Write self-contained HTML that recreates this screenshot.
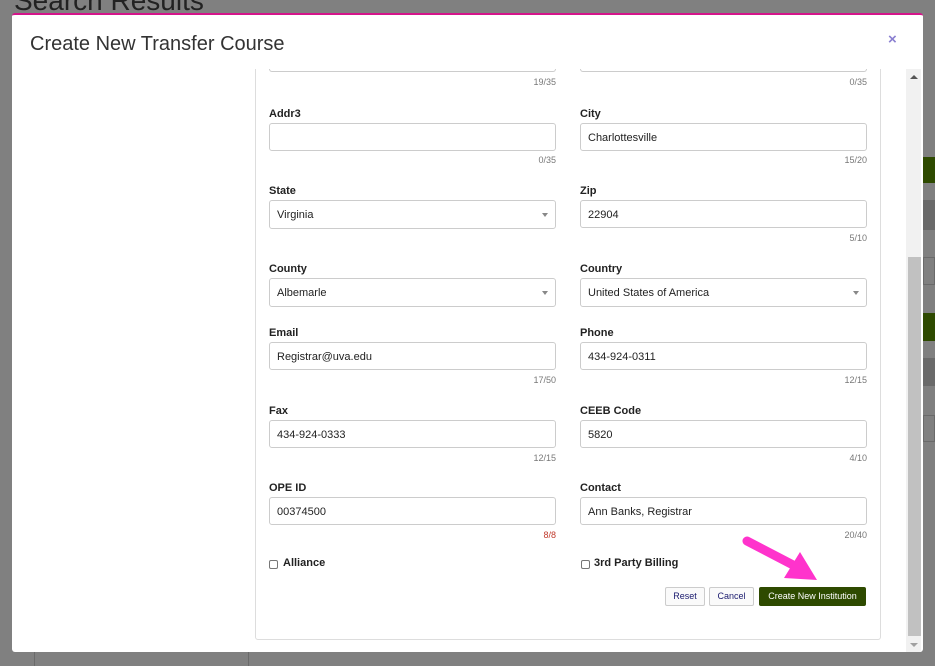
<!DOCTYPE html>
<html><head><style>
*{box-sizing:border-box;margin:0;padding:0}
body{width:935px;height:666px;overflow:hidden;background:#808080;font-family:"Liberation Sans",Arial,sans-serif;position:relative}
.a{position:absolute}
.lbl{position:absolute;font-size:11px;font-weight:bold;color:#222;margin-top:2px}
.inp{position:absolute;height:28px;width:287px;border:1px solid #ccc;border-radius:3px;background:#fff;font-size:11px;color:#222;padding:8px 7px 0 7px}
.cnt{position:absolute;font-size:9px;color:#777;text-align:right;width:60px}
.sel:after{content:"";position:absolute;right:7px;top:12px;border-left:3px solid transparent;border-right:3px solid transparent;border-top:4px solid #888}
.cb{position:absolute;width:9px;height:9px;border:1px solid #777;border-radius:2px;background:#fff}
.btn{position:absolute;height:19px;border:1px solid #ccc;border-radius:2px;background:#fafafa;font-size:9px;color:#1a1a6e;text-align:center;line-height:17px}
</style></head><body>
<div class="a" style="left:14px;top:-15px;font-size:28px;color:#222">Search Results</div>
<div class="a" style="left:923px;top:157px;width:12px;height:26px;background:#2e4a00"></div>
<div class="a" style="left:923px;top:200px;width:12px;height:30px;background:#6a6a6a"></div>
<div class="a" style="left:923px;top:257px;width:12px;height:28px;border:1px solid #6a6a6a"></div>
<div class="a" style="left:923px;top:313px;width:12px;height:28px;background:#2e4a00"></div>
<div class="a" style="left:923px;top:358px;width:12px;height:28px;background:#6a6a6a"></div>
<div class="a" style="left:923px;top:415px;width:12px;height:27px;border:1px solid #6a6a6a"></div>
<div class="a" style="left:34px;top:652px;width:1px;height:14px;background:#6a6a6a"></div>
<div class="a" style="left:248px;top:652px;width:1px;height:14px;background:#6a6a6a"></div>

<div class="a" style="left:12px;top:13px;width:911px;height:639px;background:#fff;border-top:2px solid #d4148a;border-radius:3px"></div>
<div class="a" style="left:906px;top:69px;width:15px;height:583px;background:#f1f1f1"></div>
<div class="a" style="left:908px;top:257px;width:13px;height:379px;background:#c1c1c1"></div>
<div class="a" style="left:910px;top:75px;border-left:4px solid transparent;border-right:4px solid transparent;border-bottom:4px solid #555"></div>
<div class="a" style="left:910px;top:643px;border-left:4px solid transparent;border-right:4px solid transparent;border-top:4px solid #a0a0a0"></div>
<div class="a" style="left:255px;top:40px;width:626px;height:600px;border:1px solid #ddd;border-radius:3px"></div>
<div class="inp" style="left:269px;top:44px;border-top:none"></div>
<div class="inp" style="left:580px;top:44px;border-top:none"></div>
<div class="a" style="left:13px;top:16px;width:893px;height:53px;background:#fff;z-index:1"></div>
<div class="a" style="left:30px;top:33px;font-size:20px;color:#333;z-index:2">Create New Transfer Course</div>
<div class="a" style="left:888px;top:31px;font-size:15px;color:#8a7fd0;font-weight:bold;z-index:2">×</div>
<div class="cnt" style="left:496px;top:77px">19/35</div>
<div class="cnt" style="left:807px;top:77px">0/35</div>

<div class="lbl" style="left:269px;top:106px">Addr3</div>
<div class="inp" style="left:269px;top:123px"></div>
<div class="cnt" style="left:496px;top:155px">0/35</div>
<div class="lbl" style="left:580px;top:106px">City</div>
<div class="inp" style="left:580px;top:123px">Charlottesville</div>
<div class="cnt" style="left:807px;top:155px">15/20</div>

<div class="lbl" style="left:269px;top:183px">State</div>
<div class="inp sel" style="left:269px;top:200px;height:29px">Virginia</div>
<div class="lbl" style="left:580px;top:183px">Zip</div>
<div class="inp" style="left:580px;top:200px">22904</div>
<div class="cnt" style="left:807px;top:233px">5/10</div>

<div class="lbl" style="left:269px;top:261px">County</div>
<div class="inp sel" style="left:269px;top:278px;height:29px">Albemarle</div>
<div class="lbl" style="left:580px;top:261px">Country</div>
<div class="inp sel" style="left:580px;top:278px;height:29px">United States of America</div>

<div class="lbl" style="left:269px;top:325px">Email</div>
<div class="inp" style="left:269px;top:342px">Registrar@uva.edu</div>
<div class="cnt" style="left:496px;top:375px">17/50</div>
<div class="lbl" style="left:580px;top:325px">Phone</div>
<div class="inp" style="left:580px;top:342px">434-924-0311</div>
<div class="cnt" style="left:807px;top:375px">12/15</div>

<div class="lbl" style="left:269px;top:403px">Fax</div>
<div class="inp" style="left:269px;top:420px">434-924-0333</div>
<div class="cnt" style="left:496px;top:453px">12/15</div>
<div class="lbl" style="left:580px;top:403px">CEEB Code</div>
<div class="inp" style="left:580px;top:420px">5820</div>
<div class="cnt" style="left:807px;top:453px">4/10</div>

<div class="lbl" style="left:269px;top:480px">OPE ID</div>
<div class="inp" style="left:269px;top:497px">00374500</div>
<div class="cnt" style="left:496px;top:530px;color:#c0392b">8/8</div>
<div class="lbl" style="left:580px;top:480px">Contact</div>
<div class="inp" style="left:580px;top:497px">Ann Banks, Registrar</div>
<div class="cnt" style="left:807px;top:530px">20/40</div>

<div class="cb" style="left:269px;top:560px"></div>
<div class="lbl" style="left:283px;top:555px">Alliance</div>
<div class="cb" style="left:581px;top:560px"></div>
<div class="lbl" style="left:594px;top:555px">3rd Party Billing</div>

<div class="btn" style="left:665px;top:587px;width:40px">Reset</div>
<div class="btn" style="left:709px;top:587px;width:45px">Cancel</div>
<div class="btn" style="left:759px;top:587px;width:107px;background:#2e4a00;border-color:#2e4a00;color:#fff">Create New Institution</div>

<svg class="a" style="left:0;top:0" width="935" height="666">
<line x1="747" y1="541" x2="795" y2="566" stroke="#ff33cc" stroke-width="9" stroke-linecap="round"/>
<polygon points="800,552 817,580 784,578" fill="#ff33cc"/>
</svg>
</body></html>
